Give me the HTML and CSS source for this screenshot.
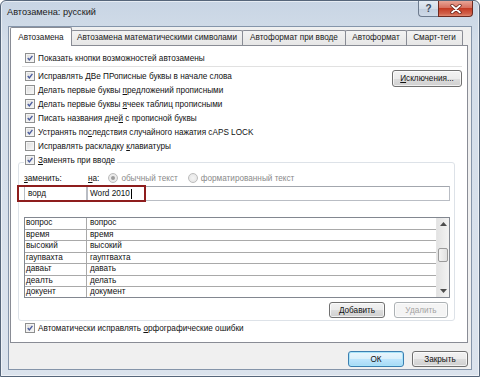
FILE: index.html
```html
<!DOCTYPE html>
<html lang="ru">
<head>
<meta charset="utf-8">
<title>Автозамена: русский</title>
<link rel="stylesheet" href="styles.css">
</head>
<body>
<div class="window">
  <div class="titlebar">
    <span class="title">Автозамена: русский</span>
    <div class="caption-btns">
      <span class="cap help">?</span>
      <span class="cap close"><svg width="12" height="10" viewBox="0 0 12 10"><path d="M2 1.5 L10 8.5 M10 1.5 L2 8.5" stroke="#5a1810" stroke-width="3.2" stroke-linecap="round"/><path d="M2 1.5 L10 8.5 M10 1.5 L2 8.5" stroke="#ffffff" stroke-width="1.8" stroke-linecap="round"/></svg></span>
    </div>
  </div>
  <div class="client">
    <div class="tabs">
      <div class="tab active t1">Автозамена</div>
      <div class="tab t2">Автозамена математическими символами</div>
      <div class="tab t3">Автоформат при вводе</div>
      <div class="tab t4">Автоформат</div>
      <div class="tab t5">Смарт-теги</div>
    </div>
    <div class="panel">
      <div class="cb-row"><span class="cb"><svg viewBox="0 0 10 10"><path d="M2.2 5 L4.2 7.4 L8 2.4" /></svg></span><span>Показать кнопки возможностей автозамены</span></div>
      <div class="sep"></div>
      <div class="opts">
        <div class="opt-list">
          <div class="cb-row"><span class="cb"><svg viewBox="0 0 10 10"><path d="M2.2 5 L4.2 7.4 L8 2.4" /></svg></span><span>Исправлять <u>Д</u>Ве ПРописные буквы в начале слова</span></div>
          <div class="cb-row"><span class="cb"></span><span>Делать первые буквы <u>п</u>редложений прописными</span></div>
          <div class="cb-row"><span class="cb"><svg viewBox="0 0 10 10"><path d="M2.2 5 L4.2 7.4 L8 2.4" /></svg></span><span>Делать первые буквы <u>я</u>чеек таблиц прописными</span></div>
          <div class="cb-row"><span class="cb"><svg viewBox="0 0 10 10"><path d="M2.2 5 L4.2 7.4 L8 2.4" /></svg></span><span>Писать названия дне<u>й</u> с прописной буквы</span></div>
          <div class="cb-row"><span class="cb"><svg viewBox="0 0 10 10"><path d="M2.2 5 L4.2 7.4 L8 2.4" /></svg></span><span>Устранять по<u>с</u>ледствия случайного нажатия cAPS LOCK</span></div>
          <div class="cb-row"><span class="cb"></span><span>Исправлять раскладку <u>к</u>лавиатуры</span></div>
        </div>
        <button class="btn exc"><u>И</u>сключения...</button>
      </div>
      <fieldset class="group">
        <legend class="legend"><span class="cb-row"><span class="cb"><svg viewBox="0 0 10 10"><path d="M2.2 5 L4.2 7.4 L8 2.4" /></svg></span><span><u>З</u>аменять при вводе</span></span></legend>
        <div class="labels">
          <span class="lbl-from"><u>з</u>аменить:</span>
          <span class="lbl-to"><u>н</u>а:</span>
          <span class="radio-item"><span class="radio on"></span>обычный текст</span>
          <span class="radio-item"><span class="radio"></span>форматированный текст</span>
        </div>
        <div class="inputs">
          <div class="field from">ворд</div>
          <div class="field to">Word 2010<span class="caret"></span></div>
          <div class="highlight"></div>
        </div>
        <div class="list">
          <div class="rows">
            <div class="row"><span class="c1">вопрос</span><span class="c2">вопрос</span></div>
            <div class="row"><span class="c1">время</span><span class="c2">время</span></div>
            <div class="row"><span class="c1">высокий</span><span class="c2">высокий</span></div>
            <div class="row"><span class="c1">гаупвахта</span><span class="c2">гауптвахта</span></div>
            <div class="row"><span class="c1">даваьт</span><span class="c2">давать</span></div>
            <div class="row"><span class="c1">деалть</span><span class="c2">делать</span></div>
            <div class="row"><span class="c1">докуент</span><span class="c2">документ</span></div>
          </div>
          <div class="scrollbar">
            <div class="sb-btn"><svg width="7" height="4" viewBox="0 0 7 4"><path d="M0 4 L3.5 0 L7 4Z" fill="#4d4d4d"/></svg></div>
            <div class="sb-track"><div class="thumb"></div></div>
            <div class="sb-btn"><svg width="7" height="4" viewBox="0 0 7 4"><path d="M0 0 L3.5 4 L7 0Z" fill="#4d4d4d"/></svg></div>
          </div>
        </div>
        <div class="list-btns">
          <button class="btn add"><u>Д</u>обавить</button>
          <button class="btn del" disabled>Удалить</button>
        </div>
      </fieldset>
      <div class="cb-row bottom-row"><span class="cb"><svg viewBox="0 0 10 10"><path d="M2.2 5 L4.2 7.4 L8 2.4" /></svg></span><span>Автоматически исправлять <u>о</u>рфографические ошибки</span></div>
    </div>
    <div class="footer">
      <button class="btn ok">ОК</button>
      <button class="btn">Закрыть</button>
    </div>
  </div>
</div>
</body>
</html>
```
FILE: styles.css
```css
* { box-sizing: border-box; }
html, body { margin: 0; padding: 0; }
body {
  width: 480px;
  height: 380px;
  overflow: hidden;
  background: #ffffff;
  font-family: "Liberation Sans", Arial, sans-serif;
  font-size: 8.2px;
  color: #111111;
}
u { text-decoration: underline; text-underline-offset: 1px; }

.window {
  width: 480px;
  height: 377px;
  border: 1px solid #56667a;
  border-radius: 6px 6px 0 0;
  background: linear-gradient(#c8d5e4 0, #d3dde9 40px, #dbe3ed 100%);
  box-shadow: inset 0 0 0 1px rgba(255, 255, 255, 0.55);
  padding: 0 7px 6px 7px;
  display: flex;
  flex-direction: column;
}

.titlebar {
  height: 25px;
  display: flex;
  justify-content: space-between;
  align-items: flex-start;
}
.title {
  margin-left: -1px;
  padding-top: 6px;
  font-size: 9.2px;
  color: #1b1b1b;
}
.caption-btns {
  display: flex;
  margin-right: -1px;
}
.cap {
  height: 16px;
  display: flex;
  align-items: center;
  justify-content: center;
  border: 1px solid #6d7b8e;
  border-top: none;
}
.help {
  width: 20px;
  border-radius: 0 0 0 4px;
  border-right: none;
  background: linear-gradient(#e4ebf3 0, #d3dde9 50%, #c2cfdf 51%, #cfdae7 100%);
  color: #3b4a5c;
  font-size: 10px;
  font-weight: bold;
}
.close {
  width: 35px;
  border-radius: 0 0 4px 0;
  border-color: #6e2a20;
  background: linear-gradient(#e8a597 0, #d7705f 45%, #c43b24 50%, #d1614a 85%, #e08a72 100%);
}

.client {
  flex: 1;
  border: 1px solid #8595aa;
  background: #f0f0f0;
  padding: 0 3px 0 1px;
  display: flex;
  flex-direction: column;
}

.tabs {
  height: 18px;
  display: flex;
  align-items: flex-end;
  position: relative;
  z-index: 2;
}
.tab {
  height: 15px;
  padding: 0;
  margin-right: -1px;
  border: 1px solid #898c95;
  border-bottom: none;
  border-radius: 2px 2px 0 0;
  background: linear-gradient(#f3f3f3, #e6e6e6);
  line-height: 14px;
  text-align: center;
  white-space: nowrap;
  color: #1a1a1a;
}
.tab.active {
  height: 19px;
  margin-bottom: -1px;
  padding-top: 3px;
  background: #ffffff;
  position: relative;
  z-index: 3;
}
.t1 { width: 62px; }
.t2 { width: 172px; }
.t3 { width: 104px; }
.t4 { width: 62px; }
.t5 { width: 57px; }

.panel {
  height: 298px;
  border: 1px solid #898c95;
  background: #ffffff;
  padding: 5px 5px 0 14px;
  display: flex;
  flex-direction: column;
}

.cb-row {
  height: 14px;
  display: flex;
  align-items: center;
  gap: 3px;
  white-space: nowrap;
}
.cb {
  width: 10px;
  height: 10px;
  flex: none;
  border: 1px solid #8e8f8f;
  background: linear-gradient(135deg, #dcdcdc, #f8f8f8);
  box-shadow: inset 0 0 0 1px #f4f4f4;
  display: flex;
}
.cb svg { width: 8px; height: 8px; }
.cb svg path {
  fill: none;
  stroke: #4a5c9e;
  stroke-width: 1.7;
}

.sep {
  height: 1px;
  background: #e1e1e1;
  margin: 1px 0 2px -3px;
}

.opts {
  display: flex;
  justify-content: space-between;
  align-items: flex-start;
}
.opt-list {
  display: flex;
  flex-direction: column;
}

.btn {
  font-family: inherit;
  font-size: 8.2px;
  color: #111111;
  height: 16px;
  padding: 0;
  border: 1px solid #707070;
  border-radius: 3px;
  background: linear-gradient(#f2f2f2 0, #ebebeb 50%, #dddddd 51%, #cfcfcf 100%);
  box-shadow: inset 0 0 0 1px rgba(255, 255, 255, 0.7);
  line-height: 13px;
}
.exc {
  width: 70px;
  height: 17px;
  margin-top: 1px;
}

.group {
  margin: 0 7px 0 -7px;
  padding: 0 4px 2px 5px;
  border: 1px solid #dde2e8;
  border-radius: 3px;
  min-width: 0;
}
.legend {
  padding: 0 2px 0 1px;
  height: 18px;
}

.labels {
  height: 12px;
  margin-top: 1px;
  display: flex;
  align-items: center;
  white-space: nowrap;
}
.lbl-from { width: 64px; }
.lbl-to { margin-right: 9px; }
.radio-item {
  display: flex;
  align-items: center;
  gap: 3px;
  color: #8a8a8a;
  margin-right: 10px;
}
.radio {
  width: 10px;
  height: 10px;
  border-radius: 50%;
  border: 1px solid #bcbcbc;
  background: radial-gradient(circle, #f4f4f4 0, #e2e2e2 100%);
  display: flex;
  align-items: center;
  justify-content: center;
}
.radio.on::after {
  content: "";
  width: 4px;
  height: 4px;
  border-radius: 50%;
  background: #9c9c9c;
}

.inputs {
  margin-top: 2px;
  height: 15px;
  display: flex;
  position: relative;
}
.field {
  height: 15px;
  border: 1px solid #b9bdc4;
  border-top-color: #a3a7ae;
  background: #ffffff;
  padding-left: 2px;
  line-height: 12px;
  white-space: nowrap;
  display: flex;
  align-items: center;
}
.field.from { width: 63px; padding-left: 3px; }
.field.to { flex: 1; }
.caret {
  width: 1px;
  height: 10px;
  background: #000000;
  margin-left: 1px;
}
.highlight {
  position: absolute;
  left: -7px;
  top: -1px;
  width: 129px;
  height: 17px;
  border: 2px solid #8e1d1d;
}

.list {
  margin-top: 16px;
  height: 81px;
  border: 1px solid #828790;
  display: flex;
  overflow: hidden;
}
.rows {
  flex: 1;
  display: flex;
  flex-direction: column;
}
.row {
  flex: none;
  height: 11.5px;
  display: flex;
  border-bottom: 1px solid #a9a9a9;
  line-height: 10px;
  white-space: nowrap;
}
.c1 {
  width: 62px;
  padding-left: 1px;
  border-right: 1px solid #a9a9a9;
}
.c2 { padding-left: 3px; }

.scrollbar {
  width: 13px;
  display: flex;
  flex-direction: column;
  background: linear-gradient(90deg, #e3e3e3, #f3f3f3);
  border-left: 1px solid #e6e6e6;
}
.sb-btn {
  height: 12px;
  display: flex;
  align-items: center;
  justify-content: center;
}
.sb-track {
  flex: 1;
  padding-top: 18px;
}
.thumb {
  height: 14px;
  margin: 0 1px;
  border: 1px solid #9a9a9a;
  border-radius: 2px;
  background: linear-gradient(90deg, #f3f3f3, #e0e0e0);
}

.list-btns {
  margin-top: 4px;
  display: flex;
  justify-content: flex-end;
  gap: 9px;
  padding-right: 2px;
}
.add { width: 56px; }
.del {
  width: 54px;
  color: #a3a3a3;
  border-color: #adb2b5;
  background: #f4f4f4;
}

.bottom-row {
  margin-top: 0;
}

.footer {
  margin-top: 8px;
  display: flex;
  justify-content: flex-end;
  gap: 8px;
}
.footer .btn { width: 56px; }
.ok {
  border-color: #3c7fb1;
  box-shadow: inset 0 0 0 1px #a9e4f9;
  background: linear-gradient(#eaf6fd 0, #d9f0fc 50%, #bee6fd 51%, #a7d9f5 100%);
}
```
